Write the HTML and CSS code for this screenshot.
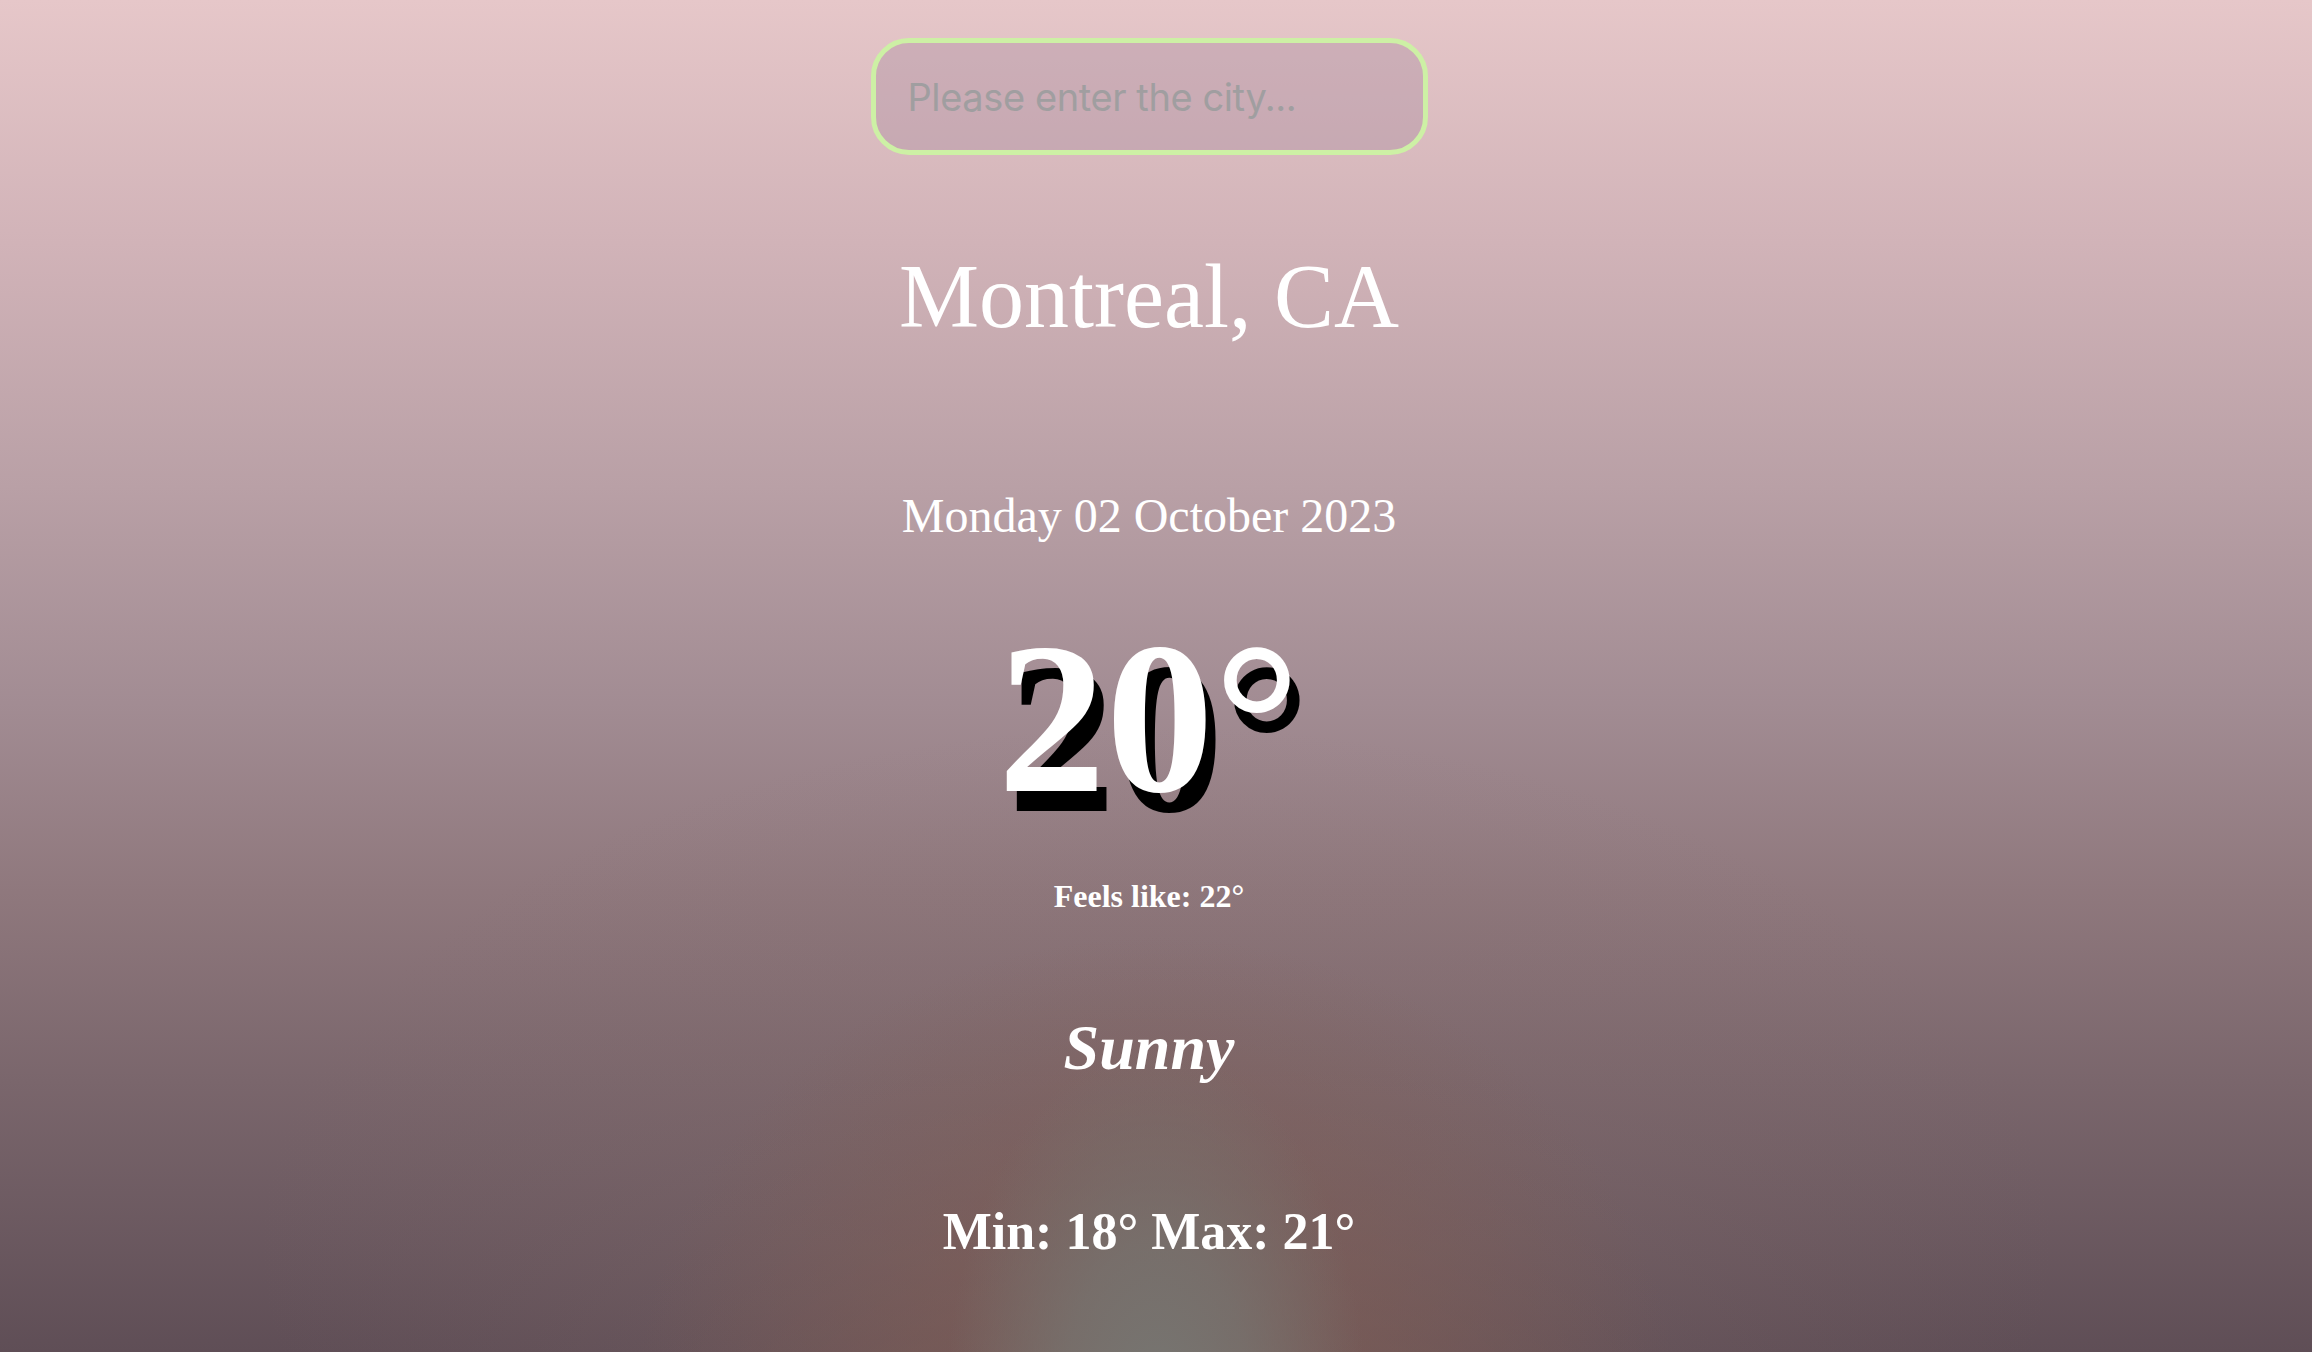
FILE: index.html
```html
<!DOCTYPE html>
<html lang="en">
<head>
<meta charset="utf-8">
<title>Weather</title>
<link rel="stylesheet" href="styles.css">
</head>
<body>
<main class="app">
  <div class="search">
    <input class="search-input" type="text" placeholder="Please enter the city...">
  </div>
  <h1 class="city">Montreal, CA</h1>
  <div class="date">Monday 02 October 2023</div>
  <div class="temp">20°</div>
  <div class="feels">Feels like: 22°</div>
  <div class="condition">Sunny</div>
  <div class="range">Min: 18° Max: 21°</div>
</main>
</body>
</html>
```
FILE: styles.css
```css
html, body {
  margin: 0;
  padding: 0;
  height: 100%;
}
body {
  min-height: 1352px;
  overflow: hidden;
  font-family: "Liberation Serif", "Times New Roman", serif;
  color: #fff;
  background:
    radial-gradient(ellipse 210px 360px at 50% 104%, rgba(118,118,114,1) 0%, rgba(118,116,112,0.75) 45%, rgba(118,112,110,0) 100%),
    radial-gradient(ellipse 520px 470px at 50% 104%, rgba(130,94,84,0.75) 0%, rgba(128,92,82,0.45) 50%, rgba(128,92,82,0) 100%),
    radial-gradient(ellipse 900px 520px at 50% 92%, rgba(132,108,106,0.4) 0%, rgba(132,108,106,0) 100%),
    linear-gradient(to bottom, #e6c7c9 0%, #d1b3b8 18%, #b9a0a6 36%, #a28c93 52%, #8f787d 66%, #7a666c 80%, #5f4e56 100%);
}
.app {
  box-sizing: border-box;
  padding: 38px 14px 0 0;
  display: flex;
  flex-direction: column;
  align-items: center;
  text-align: center;
}
.search {
  display: flex;
}
.search-input {
  box-sizing: border-box;
  width: 557px;
  height: 117px;
  border: 5.5px solid #cdf0a5;
  border-radius: 38px;
  background: rgba(165, 135, 155, 0.34);
  padding: 0 0 0 32px;
  font-family: Inter, "Noto Sans", sans-serif;
  font-size: 38px;
  color: #555;
  outline: none;
}
.search-input::placeholder {
  color: #a09ea0;
  letter-spacing: -0.4px;
}
.city {
  margin: 97px 0 0;
  font-size: 90px;
  font-weight: 400;
  line-height: 1;
}
.date {
  margin-top: 150px;
  font-size: 48px;
  line-height: 1;
}
.temp {
  margin-top: 71px;
  font-size: 216px;
  font-weight: 700;
  line-height: 1;
  text-shadow: 10px 20px 0 #000;
}
.feels {
  margin-top: 53px;
  font-size: 32px;
  font-weight: 700;
  line-height: 1;
}
.condition {
  margin-top: 104px;
  font-size: 64px;
  font-weight: 700;
  font-style: italic;
  line-height: 1;
}
.range {
  margin-top: 126px;
  font-size: 52px;
  font-weight: 700;
  line-height: 1;
}
```
